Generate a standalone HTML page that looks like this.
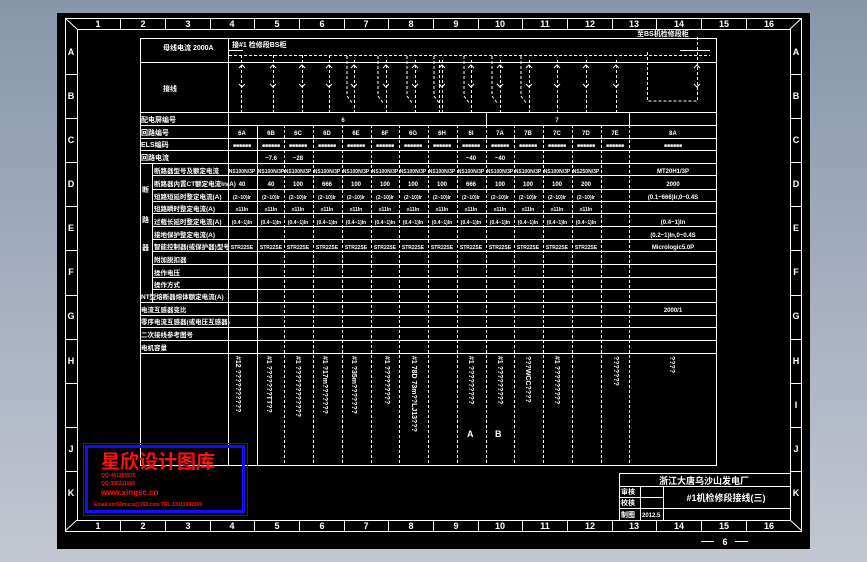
<!DOCTYPE html>
<html><head><meta charset="utf-8"><style>
html,body{margin:0;padding:0;width:867px;height:562px;overflow:hidden;background:linear-gradient(#8796ab,#c3c7d1);}
svg{display:block}
text{font-family:"Liberation Sans","Noto Sans CJK SC",sans-serif;fill:#fff;font-weight:bold}
</style></head><body>
<svg width="867" height="562" viewBox="0 0 867 562" xmlns="http://www.w3.org/2000/svg">
<rect x="57" y="13" width="753" height="536" fill="#000"/>
<g stroke="#fff" stroke-width="1" fill="none">
<rect x="65.5" y="18.5" width="736" height="513"/>
<rect x="77.5" y="29.5" width="713" height="491"/>
<line x1="65" y1="18" x2="77" y2="29"/><line x1="802" y1="18" x2="790" y2="29"/>
<line x1="65" y1="531" x2="77" y2="520"/><line x1="802" y1="531" x2="790" y2="520"/>
<path d="M120.5 18v11M165.5 18v11M210.5 18v11M254.5 18v11M299.5 18v11M344.5 18v11M388.5 18v11M433.5 18v11M478.5 18v11M522.5 18v11M567.5 18v11M612.5 18v11M656.5 18v11M701.5 18v11M746.5 18v11"/>
<path d="M120.5 520v11M165.5 520v11M210.5 520v11M254.5 520v11M299.5 520v11M344.5 520v11M388.5 520v11M433.5 520v11M478.5 520v11M522.5 520v11M567.5 520v11M612.5 520v11M656.5 520v11M701.5 520v11M746.5 520v11"/>
<path d="M65 74.5h12M65 118.5h12M65 162.5h12M65 206.5h12M65 250.5h12M65 295.5h12M65 339.5h12M65 383.5h12M65 427.5h12M65 471.5h12"/>
<path d="M790 74.5h12M790 118.5h12M790 162.5h12M790 206.5h12M790 250.5h12M790 295.5h12M790 339.5h12M790 383.5h12M790 427.5h12M790 471.5h12"/>
<rect x="140.5" y="38.5" width="576" height="427"/>
<path d="M140 62.5h577M140 112.5h577M140 125.5h577M140 138.5h577M140 150.5h577M140 163.5h577M152 175.5h565M152 189.5h565M152 201.5h565M152 213.5h565M152 226.5h565M152 239.5h565M152 251.5h565M152 264.5h565M152 277.5h565M152 289.5h565M140 302.5h577M140 315.5h577M140 327.5h577M140 340.5h577M140 353.5h577"/>
<path d="M228.5 38v428M152.5 163v139M257.5 125v341"/>
<path d="M486.5 112v13M629.5 112v13"/>
<g stroke-dasharray="3,2">
<path d="M284.5 125v341M313.5 125v341M342.5 125v341M371.5 125v341M399.5 125v341M428.5 125v341M457.5 125v341M486.5 125v341M514.5 125v341M543.5 125v341M572.5 125v341M601.5 125v341M629.5 125v341"/>
<path d="M229 55.5h481M241.5 55v57M273.5 55v57M302.5 55v57M329.5 55v57M354.5 60v52M386.5 60v52M415.5 60v52M439.5 60v52M442.5 60v52M471.5 60v52M500.5 60v52M529.5 60v52M557.5 60v52M586.5 60v52M616.5 60v52M647.5 52v49h50v-66"/>
<path d="M347 56v40l6 8M378 56v40l6 8M407 56v40l6 8M434 56v40l6 8M464 56v40l6 8M492 56v40l6 8M521 56v40l6 8"/>
</g>
<path d="M229 50.5h14M680 50.5h30M239 68l3-3 3 3M270 68l3-3 3 3M299 68l3-3 3 3M326 68l3-3 3 3M351 68l3-3 3 3M383 68l3-3 3 3M412 68l3-3 3 3M439 68l3-3 3 3M468 68l3-3 3 3M497 68l3-3 3 3M526 68l3-3 3 3M554 68l3-3 3 3M583 68l3-3 3 3M613 68l3-3 3 3M694 68l3-3 3 3"/>
<path d="M239 84l3 3 3-3M270 84l3 3 3-3M299 84l3 3 3-3M326 84l3 3 3-3M351 84l3 3 3-3M383 84l3 3 3-3M412 84l3 3 3-3M439 84l3 3 3-3M468 84l3 3 3-3M497 84l3 3 3-3M526 84l3 3 3-3M554 84l3 3 3-3M583 84l3 3 3-3M613 84l3 3 3-3M694 84l3 3 3-3"/>
<path d="M619.5 473v47M619 473.5h171M619 486.5h171M619 497.5h44M619 508.5h171M640.5 486v34M663.5 486v34"/>
<path d="M701 541.5h13M735 541.5h13"/>
</g>
<g font-size="9" text-anchor="middle">
<text x="98" y="27">1</text><text x="143" y="27">2</text><text x="188" y="27">3</text><text x="232" y="27">4</text><text x="277" y="27">5</text><text x="322" y="27">6</text><text x="366" y="27">7</text><text x="411" y="27">8</text><text x="456" y="27">9</text><text x="500" y="27">10</text><text x="545" y="27">11</text><text x="590" y="27">12</text><text x="634" y="27">13</text><text x="679" y="27">14</text><text x="724" y="27">15</text><text x="769" y="27">16</text>
<text x="98" y="529">1</text><text x="143" y="529">2</text><text x="188" y="529">3</text><text x="232" y="529">4</text><text x="277" y="529">5</text><text x="322" y="529">6</text><text x="366" y="529">7</text><text x="411" y="529">8</text><text x="456" y="529">9</text><text x="500" y="529">10</text><text x="545" y="529">11</text><text x="590" y="529">12</text><text x="634" y="529">13</text><text x="679" y="529">14</text><text x="724" y="529">15</text><text x="769" y="529">16</text>
<text x="71" y="55">A</text><text x="71" y="99">B</text><text x="71" y="143">C</text><text x="71" y="187">D</text><text x="71" y="231">E</text><text x="71" y="275">F</text><text x="71" y="319">G</text><text x="71" y="364">H</text><text x="71" y="452">J</text><text x="71" y="496">K</text>
<text x="796" y="55">A</text><text x="796" y="99">B</text><text x="796" y="143">C</text><text x="796" y="187">D</text><text x="796" y="231">E</text><text x="796" y="275">F</text><text x="796" y="319">G</text><text x="796" y="364">H</text><text x="796" y="408">I</text><text x="796" y="452">J</text><text x="796" y="496">K</text>
<text x="725" y="545">6</text>
</g>
<g font-size="7">
<text x="163" y="50">母线电流 2000A</text>
<text x="232" y="47">接#1 检修段BS柜</text>
<text x="637" y="36">至BS机检修段柜</text>
<text x="163" y="91">接线</text>
<text x="141" y="122">配电屏编号</text>
<text x="141" y="135">回路编号</text>
<text x="141" y="147">ELS编码</text>
<text x="141" y="160">回路电流</text>
<text x="142" y="192">断</text><text x="142" y="222">路</text><text x="142" y="250">器</text>
<text x="154" y="173" font-size="6.5">断路器型号及额定电流</text>
<text x="154" y="186" font-size="6.5">断路器内置CT额定电流In(A)</text>
<text x="154" y="199" font-size="6.5">短路短延时整定电流(A)</text>
<text x="154" y="211" font-size="6.5">短路瞬时整定电流(A)</text>
<text x="154" y="224" font-size="6.5">过载长延时整定电流(A)</text>
<text x="154" y="237" font-size="6.5">接地保护整定电流(A)</text>
<text x="154" y="249" font-size="6.5">智能控制器(或保护器)型号</text>
<text x="154" y="262" font-size="6.5">附加脱扣器</text>
<text x="154" y="275" font-size="6.5">操作电压</text>
<text x="154" y="287" font-size="6.5">操作方式</text>
<text x="141" y="299" font-size="6.5">NT型熔断器熔体额定电流(A)</text>
<text x="141" y="312" font-size="6.5">电流互感器变比</text>
<text x="141" y="324" font-size="6.5">零序电流互感器(或电压互感器)</text>
<text x="141" y="337" font-size="6.5">二次接线参考图号</text>
<text x="141" y="350" font-size="6.5">电机容量</text>
</g>
<g font-size="6" text-anchor="middle">
<text x="343" y="122">6</text><text x="557" y="122">7</text>
<text x="242" y="135">6A</text><text x="271" y="135">6B</text><text x="298" y="135">6C</text><text x="327" y="135">6D</text><text x="356" y="135">6E</text><text x="385" y="135">6F</text><text x="413" y="135">6G</text><text x="442" y="135">6H</text><text x="471" y="135">6I</text><text x="500" y="135">7A</text><text x="528" y="135">7B</text><text x="557" y="135">7C</text><text x="586" y="135">7D</text><text x="615" y="135">7E</text><text x="673" y="135">8A</text>
<text x="271" y="160">~7.6</text><text x="298" y="160">~28</text><text x="471" y="160">~40</text><text x="500" y="160">~40</text>
<text x="242" y="186">40</text><text x="271" y="186">40</text><text x="298" y="186">100</text><text x="327" y="186">666</text><text x="356" y="186">100</text><text x="385" y="186">100</text><text x="413" y="186">100</text><text x="442" y="186">100</text><text x="471" y="186">666</text><text x="500" y="186">100</text><text x="528" y="186">100</text><text x="557" y="186">100</text><text x="586" y="186">200</text><text x="673" y="186">2000</text>
<text x="673" y="173">MT20H1/3P</text><text x="673" y="199">(0.1~666)Ir,0~0.4S</text><text x="673" y="224">(0.4~1)In</text><text x="673" y="237">(0.2~1)In,0~0.4S</text><text x="673" y="249">Micrologic5.0P</text><text x="673" y="312">2000/1</text>
</g>
<g font-size="5" text-anchor="middle">
<text x="242" y="147">■■■■■■</text><text x="271" y="147">■■■■■■</text><text x="298" y="147">■■■■■■</text><text x="327" y="147">■■■■■■</text><text x="356" y="147">■■■■■■</text><text x="385" y="147">■■■■■■</text><text x="413" y="147">■■■■■■</text><text x="442" y="147">■■■■■■</text><text x="471" y="147">■■■■■■</text><text x="500" y="147">■■■■■■</text><text x="528" y="147">■■■■■■</text><text x="557" y="147">■■■■■■</text><text x="586" y="147">■■■■■■</text><text x="615" y="147">■■■■■■</text><text x="673" y="147">■■■■■■</text>
<text x="242" y="173">NS100N/3P</text><text x="271" y="173">NS100N/3P</text><text x="298" y="173">NS100N/3P</text><text x="327" y="173">NS100N/3P</text><text x="356" y="173">NS100N/3P</text><text x="385" y="173">NS100N/3P</text><text x="413" y="173">NS100N/3P</text><text x="442" y="173">NS100N/3P</text><text x="471" y="173">NS100N/3P</text><text x="500" y="173">NS100N/3P</text><text x="528" y="173">NS100N/3P</text><text x="557" y="173">NS100N/3P</text><text x="586" y="173">NS250N/3P</text>
<text x="242" y="199">(2~10)Ir</text><text x="271" y="199">(2~10)Ir</text><text x="298" y="199">(2~10)Ir</text><text x="327" y="199">(2~10)Ir</text><text x="356" y="199">(2~10)Ir</text><text x="385" y="199">(2~10)Ir</text><text x="413" y="199">(2~10)Ir</text><text x="442" y="199">(2~10)Ir</text><text x="471" y="199">(2~10)Ir</text><text x="500" y="199">(2~10)Ir</text><text x="528" y="199">(2~10)Ir</text><text x="557" y="199">(2~10)Ir</text><text x="586" y="199">(2~10)Ir</text>
<text x="242" y="211">≥11In</text><text x="271" y="211">≥11In</text><text x="298" y="211">≥11In</text><text x="327" y="211">≥11In</text><text x="356" y="211">≥11In</text><text x="385" y="211">≥11In</text><text x="413" y="211">≥11In</text><text x="442" y="211">≥11In</text><text x="471" y="211">≥11In</text><text x="500" y="211">≥11In</text><text x="528" y="211">≥11In</text><text x="557" y="211">≥11In</text><text x="586" y="211">≥11In</text>
<text x="242" y="224">(0.4~1)In</text><text x="271" y="224">(0.4~1)In</text><text x="298" y="224">(0.4~1)In</text><text x="327" y="224">(0.4~1)In</text><text x="356" y="224">(0.4~1)In</text><text x="385" y="224">(0.4~1)In</text><text x="413" y="224">(0.4~1)In</text><text x="442" y="224">(0.4~1)In</text><text x="471" y="224">(0.4~1)In</text><text x="500" y="224">(0.4~1)In</text><text x="528" y="224">(0.4~1)In</text><text x="557" y="224">(0.4~1)In</text><text x="586" y="224">(0.4~1)In</text>
<text x="242" y="249">STR22SE</text><text x="271" y="249">STR22SE</text><text x="298" y="249">STR22SE</text><text x="327" y="249">STR22SE</text><text x="356" y="249">STR22SE</text><text x="385" y="249">STR22SE</text><text x="413" y="249">STR22SE</text><text x="442" y="249">STR22SE</text><text x="471" y="249">STR22SE</text><text x="500" y="249">STR22SE</text><text x="528" y="249">STR22SE</text><text x="557" y="249">STR22SE</text><text x="586" y="249">STR22SE</text>
</g>
<g font-size="7" font-weight="normal">
<text transform="translate(236,356) rotate(90)">#12 ??????????</text>
<text transform="translate(267,356) rotate(90)">#1 ???????TT??</text>
<text transform="translate(296,356) rotate(90)">#1 ????????????</text>
<text transform="translate(323,356) rotate(90)">#1 ?17m???????</text>
<text transform="translate(352,356) rotate(90)">#1 ?35m???????</text>
<text transform="translate(385,356) rotate(90)">#1 ?????????</text>
<text transform="translate(412,356) rotate(90)">#1 78D 73m??LJ13???</text>
<text transform="translate(469,356) rotate(90)">#1 ?????????</text>
<text transform="translate(498,356) rotate(90)">#1 ?????????</text>
<text transform="translate(526,356) rotate(90)">???WCC????</text>
<text transform="translate(555,356) rotate(90)">#1 ?????????</text>
<text transform="translate(614,356) rotate(90)">???????</text>
<text transform="translate(670,356) rotate(90)">????</text>
<text x="467" y="437" font-size="9">A</text><text x="495" y="437" font-size="9">B</text>
</g>
<g font-size="9" text-anchor="middle"><text x="704" y="484">浙江大唐乌沙山发电厂</text><text x="726" y="501">#1机检修段接线(三)</text></g>
<g font-size="7"><text x="621" y="494">审核</text><text x="621" y="505">校核</text><text x="621" y="517">制图</text><text x="642" y="517" font-weight="normal" font-size="6">2012.5</text></g>
<rect x="83.5" y="443.5" width="164" height="72" fill="none" stroke="#1010ff" stroke-width="1"/>
<rect x="86.5" y="446.5" width="157" height="65" fill="none" stroke="#1010ff" stroke-width="3"/>
<g font-weight="normal">
<text x="101" y="468" font-size="19" style="fill:#ff1010">星欣设计图库</text>
<text x="101" y="477" font-size="5" style="fill:#ff1010">QQ:441255935</text>
<text x="101" y="485" font-size="5" style="fill:#ff1010">QQ:396211956</text>
<text x="101" y="495" font-size="8" style="fill:#ff1010">www.xingsc.cn</text>
<text x="94" y="506" font-size="5" style="fill:#ff1010">Email:xin54muca@163.com  TEL:13111542300</text>
</g>
</svg>
</body></html>
